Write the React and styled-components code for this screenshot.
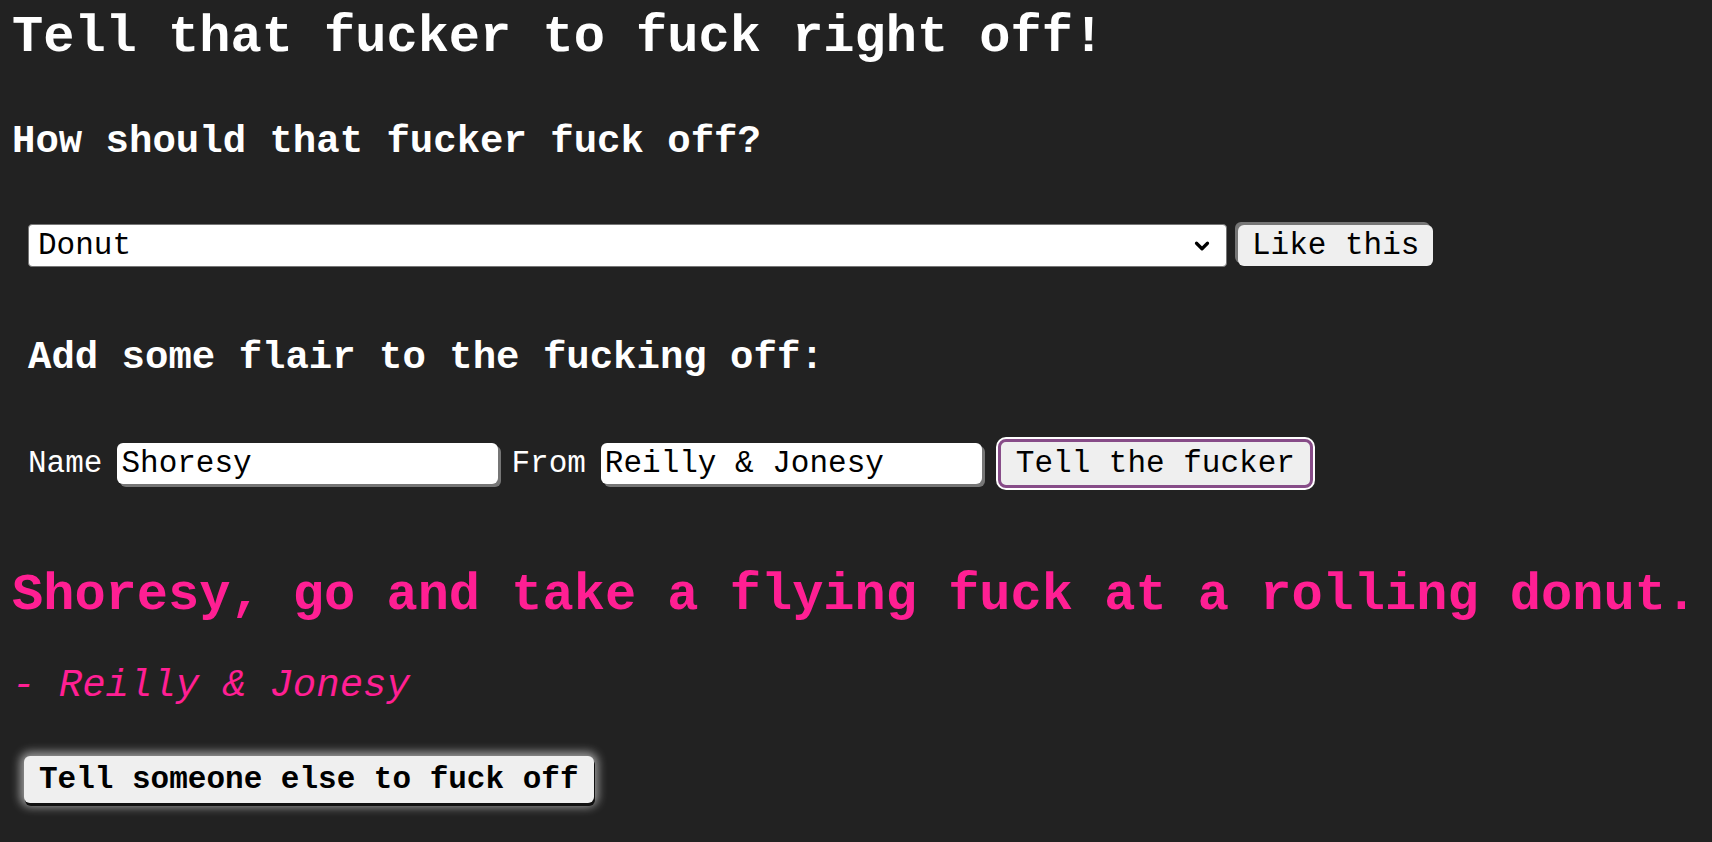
import React, { useState } from "react";
import styled, { createGlobalStyle } from "styled-components";
import { ChevronDown } from "lucide-react";

const GlobalStyle = createGlobalStyle`
  html, body {
    margin: 0;
    padding: 0;
    background: #222222;
  }
  body {
    font-family: "Liberation Mono", "Courier New", monospace;
    color: #ffffff;
  }
`;

const Page = styled.main`
  padding: 8px 8px 40px 12px;
  display: flex;
  flex-direction: column;
  align-items: flex-start;
`;

const Title = styled.h1`
  margin: 0;
  font-size: 52px;
  line-height: 60px;
  font-weight: bold;
  color: ${(p) => p.color || "#ffffff"};
`;

const Heading = styled.h2`
  margin: ${(p) => p.margin || "0"};
  font-size: 39px;
  line-height: 46px;
  font-weight: ${(p) => (p.italic ? "normal" : "bold")};
  font-style: ${(p) => (p.italic ? "italic" : "normal")};
  color: ${(p) => p.color || "#ffffff"};
`;

const Form = styled.form`
  display: flex;
  flex-direction: column;
  align-items: flex-start;
  padding-left: 16px;
  margin-top: 59px;
`;

const Row = styled.div`
  display: flex;
  align-items: center;
  gap: ${(p) => p.gap || "11px"};
  margin-top: ${(p) => p.top || "0"};
`;

const SelectWrap = styled.div`
  position: relative;
  width: 1199px;
  height: 43px;
`;

const Select = styled.select`
  appearance: none;
  width: 100%;
  height: 100%;
  box-sizing: border-box;
  border: 1px solid #767676;
  border-radius: 4px;
  background: #ffffff;
  font-family: inherit;
  font-size: 31px;
  padding: 0 40px 0 9px;
  color: #000;
`;

const Chevron = styled(ChevronDown)`
  position: absolute;
  right: 14px;
  top: 11px;
  pointer-events: none;
  color: #000;
`;

const Button = styled.button`
  font-family: inherit;
  font-size: 31px;
  font-weight: ${(p) => (p.bold ? "bold" : "normal")};
  color: #000;
  background: #efefef;
  border: none;
  border-radius: 6px;
  padding: 0 14px;
  height: 41px;
  cursor: pointer;
`;

const LikeButton = styled(Button)`
  box-shadow: -3px -3px 0 #767676;
`;

const TellButton = styled(Button)`
  border: 3px solid #874c88;
  border-radius: 8px;
  box-shadow: 0 0 0 2px #ffffff;
  padding: 0 15px;
  height: 49px;
  margin-left: 3px;
`;

const AgainButton = styled(Button)`
  border-radius: 6px;
  padding: 0 15px;
  height: 47px;
  margin: 47px 0 0 12px;
  box-shadow: 1px 3px 0 #111111, 0 0 10px 4px rgba(255, 255, 255, 0.55);
`;

const Label = styled.label`
  font-size: 31px;
  color: #ffffff;
`;

const Input = styled.input`
  font-family: inherit;
  font-size: 31px;
  width: 381px;
  height: 41px;
  box-sizing: border-box;
  border: none;
  border-radius: 6px;
  padding: 0 4px;
  background: #ffffff;
  color: #000;
  box-shadow: 3px 3px 0 #767676;
`;

const Field = styled.div`
  display: flex;
  align-items: center;
  gap: 15px;
`;

const Output = styled.section`
  display: flex;
  flex-direction: column;
  align-items: flex-start;
  margin-top: 78px;
`;

export default function App() {
  const [name, setName] = useState("Shoresy");
  const [from, setFrom] = useState("Reilly & Jonesy");

  return (
    <>
      <GlobalStyle />
      <Page>
        <Title>Tell that fucker to fuck right off!</Title>
        <Heading margin="51px 0 0 0">How should that fucker fuck off?</Heading>

        <Form onSubmit={(e) => e.preventDefault()}>
          <Row>
            <SelectWrap>
              <Select defaultValue="donut">
                <option value="donut">Donut</option>
              </Select>
              <Chevron size={22} strokeWidth={3.5} />
            </SelectWrap>
            <LikeButton type="button">Like this</LikeButton>
          </Row>

          <Heading margin="68px 0 0 0">Add some flair to the fucking off:</Heading>

          <Row gap="13px" top="58px">
            <Field>
              <Label>Name</Label>
              <Input value={name} onChange={(e) => setName(e.target.value)} />
            </Field>
            <Field>
              <Label>From</Label>
              <Input value={from} onChange={(e) => setFrom(e.target.value)} />
            </Field>
            <TellButton type="submit">Tell the fucker</TellButton>
          </Row>
        </Form>

        <Output>
          <Title color="#ff1f93">
            {name}, go and take a flying fuck at a rolling donut.
          </Title>
          <Heading italic color="#ff1f93" margin="37px 0 0 0">
            - {from}
          </Heading>
          <AgainButton type="button" bold>
            Tell someone else to fuck off
          </AgainButton>
        </Output>
      </Page>
    </>
  );
}
